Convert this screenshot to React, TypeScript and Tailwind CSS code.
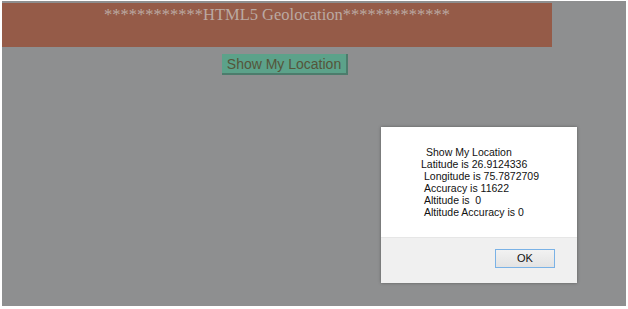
export default function App() {
  const lines = [
    { text: "Show My Location", pad: "pl-[45px]" },
    { text: "Latitude is 26.9124336", pad: "pl-[40px]" },
    { text: "Longitude is 75.7872709", pad: "pl-[43px]" },
    { text: "Accuracy is 11622", pad: "pl-[43px]" },
    { text: "Altitude is  0", pad: "pl-[43px]" },
    { text: "Altitude Accuracy is 0", pad: "pl-[43px]" },
  ];

  return (
    <div className="w-[628px] h-[309px] bg-white pl-[2px] pt-[1px] pr-[2px] pb-[3px]">
      <div className="relative w-full h-full bg-[#8e8f90] pt-[2px]">
        <div className="w-[550px] h-[44px] bg-[#955b48] text-center pt-[1px]">
          <div className="text-[16.5px] leading-[21px] text-[#bba9a2] font-['Liberation_Serif',serif] whitespace-pre">
            {"************HTML5 Geolocation*************"}
          </div>
        </div>
        <div className="flex justify-center w-[550px] mt-[7px]">
          <div className="ml-[16px] h-[21px] px-[5px] bg-[#5ca28a] border-r-2 border-b-2 border-[#4c7c6c] text-[14px] leading-[20px] text-[#55553a] font-['Liberation_Sans',sans-serif]">
            Show My Location
          </div>
        </div>

        <div className="absolute left-[379px] top-[126px] w-[196px] h-[156px] bg-white shadow-[0_0_3px_rgba(0,0,0,0.35)] flex flex-col font-['Liberation_Sans',Arial,sans-serif] text-[10.5px] text-[#111]">
          <div className="flex-1 pt-[19px]">
            {lines.map((l) => (
              <div key={l.text} className={`${l.pad} leading-[12px] whitespace-pre`}>
                {l.text}
              </div>
            ))}
          </div>
          <div className="h-[46px] bg-[#f0f0f0] border-t border-[#e6e6e6] flex items-start justify-end pr-[22px] pt-[11px]">
            <div className="w-[60px] h-[19px] border border-[#7ab2e6] bg-gradient-to-b from-[#f2f2f2] to-[#e3e3e3] text-center leading-[17px] text-[11px] text-[#111]">
              OK
            </div>
          </div>
        </div>
      </div>
    </div>
  );
}
